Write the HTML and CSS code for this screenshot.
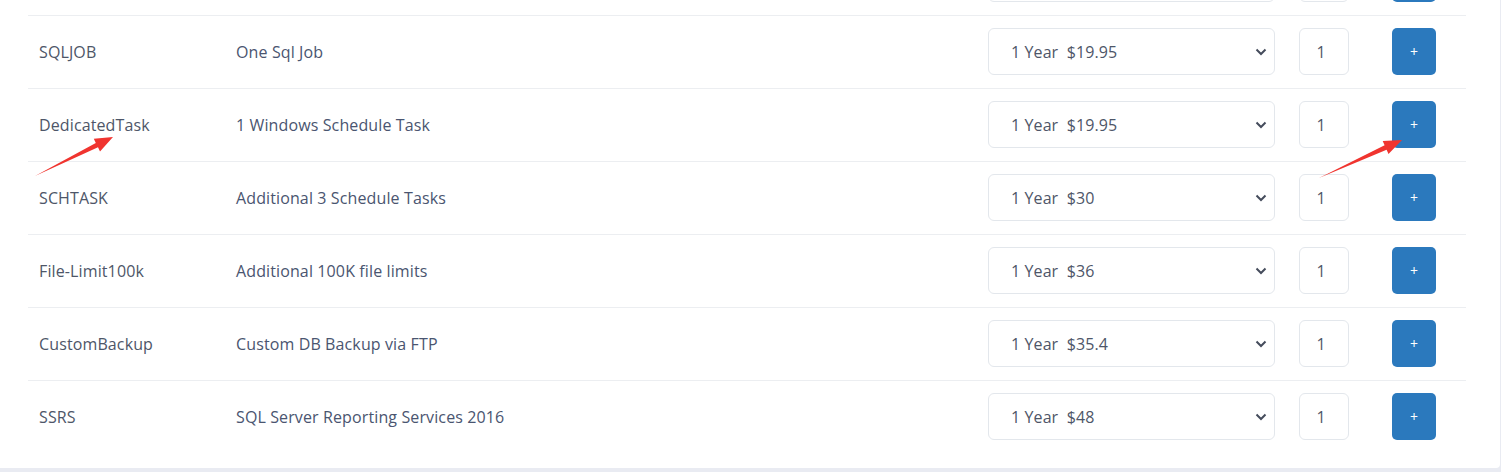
FILE: index.html
```html
<!DOCTYPE html>
<html lang="en">
<head>
  <meta charset="UTF-8">
  <title>Add-ons</title>
  <link rel="stylesheet" href="styles.css">
</head>
<body>
  <div class="panel">
    <div class="addon-list">
      <!-- row above the fold, only its bottom edge shows -->
      <div class="addon-row">
        <div class="addon-name"></div>
        <div class="addon-desc"></div>
        <div class="ctl"><select class="term-select"><option></option></select></div>
        <div class="ctl"><input class="qty" type="text" value=""></div>
        <div class="ctl"><button class="add-btn"></button></div>
      </div>
      <div class="addon-row">
        <div class="addon-name">SQLJOB</div>
        <div class="addon-desc">One Sql Job</div>
        <div class="ctl"><select class="term-select"><option>1 Year&nbsp; $19.95</option></select></div>
        <div class="ctl"><input class="qty" type="text" value="1"></div>
        <div class="ctl"><button class="add-btn">+</button></div>
      </div>
      <div class="addon-row">
        <div class="addon-name">DedicatedTask</div>
        <div class="addon-desc">1 Windows Schedule Task</div>
        <div class="ctl"><select class="term-select"><option>1 Year&nbsp; $19.95</option></select></div>
        <div class="ctl"><input class="qty" type="text" value="1"></div>
        <div class="ctl"><button class="add-btn">+</button></div>
      </div>
      <div class="addon-row">
        <div class="addon-name">SCHTASK</div>
        <div class="addon-desc">Additional 3 Schedule Tasks</div>
        <div class="ctl"><select class="term-select"><option>1 Year&nbsp; $30</option></select></div>
        <div class="ctl"><input class="qty" type="text" value="1"></div>
        <div class="ctl"><button class="add-btn">+</button></div>
      </div>
      <div class="addon-row">
        <div class="addon-name">File-Limit100k</div>
        <div class="addon-desc">Additional 100K file limits</div>
        <div class="ctl"><select class="term-select"><option>1 Year&nbsp; $36</option></select></div>
        <div class="ctl"><input class="qty" type="text" value="1"></div>
        <div class="ctl"><button class="add-btn">+</button></div>
      </div>
      <div class="addon-row">
        <div class="addon-name">CustomBackup</div>
        <div class="addon-desc">Custom DB Backup via FTP</div>
        <div class="ctl"><select class="term-select"><option>1 Year&nbsp; $35.4</option></select></div>
        <div class="ctl"><input class="qty" type="text" value="1"></div>
        <div class="ctl"><button class="add-btn">+</button></div>
      </div>
      <div class="addon-row">
        <div class="addon-name">SSRS</div>
        <div class="addon-desc">SQL Server Reporting Services 2016</div>
        <div class="ctl"><select class="term-select"><option>1 Year&nbsp; $48</option></select></div>
        <div class="ctl"><input class="qty" type="text" value="1"></div>
        <div class="ctl"><button class="add-btn">+</button></div>
      </div>
    </div>
  </div>

  <!-- annotation arrows -->
  <svg class="marks" width="1501" height="472" viewBox="0 0 1501 472">
    <polygon fill="#f0342f" points="35,176 98,147.3 100,151.4 113,137 93.8,138.8 95.8,142.9"/>
    <polygon fill="#f0342f" points="1319,178 1386.6,149.8 1388.5,153.9 1402,140 1382.7,141.1 1384.6,145.2"/>
  </svg>
</body>
</html>
```

FILE: styles.css
```css
body {
  margin: 0;
  background: #e9ebf2;
  font-family: "Open Sans", Arial, sans-serif;
  font-size: 16px;
  color: #4e5668;
  overflow: hidden;
}
.panel {
  width: 1500px;
  margin-top: -57px;
  background: #fff;
  border-radius: 0 0 4px 0;
  padding: 0 0 15px 28px;
  box-sizing: border-box;
}
.addon-list {
  width: 1438px;
}
.addon-row {
  display: grid;
  grid-template-columns: 197px 752px 311px 93px 74px;
  align-items: center;
  height: 72px;
  padding-left: 11px;
  border-bottom: 1px solid #eceef1;
}
.addon-row:last-child {
  border-bottom: none;
}
.ctl {
  align-self: start;
  padding-top: 12px;
}
.addon-name,
.addon-desc {
  line-height: 22px;
  letter-spacing: 0.12px;
}
.addon-desc {
  color: #4a5570;
}
.term-select {
  display: block;
  width: 287px;
  height: 47px;
  margin: 0;
  padding: 0 30px 0 22px;
  border: 1px solid #e3e7ec;
  border-radius: 6px;
  background: #fff url("data:image/svg+xml;utf8,<svg xmlns='http://www.w3.org/2000/svg' width='12' height='8' viewBox='0 0 12 8'><path d='M1.5 1.5 6 6l4.5-4.5' fill='none' stroke='%23454c5c' stroke-width='2'/></svg>") no-repeat right 7px center;
  appearance: none;
  -webkit-appearance: none;
  font-family: inherit;
  font-size: 16px;
  letter-spacing: 0.1px;
  color: #4e5668;
}
.qty {
  display: block;
  width: 50px;
  height: 47px;
  margin: 0;
  padding: 0 6px 0 0;
  box-sizing: border-box;
  border: 1px solid #e3e7ec;
  border-radius: 6px;
  text-align: center;
  font-family: inherit;
  font-size: 16px;
  color: #4e5668;
}
.add-btn {
  display: block;
  width: 44px;
  height: 47px;
  border: none;
  border-radius: 5px;
  background: #2b79bd;
  color: #fff;
  font-family: inherit;
  font-size: 14px;
  padding: 0;
  cursor: pointer;
}
.marks {
  position: absolute;
  top: 0;
  left: 0;
  pointer-events: none;
}
```
